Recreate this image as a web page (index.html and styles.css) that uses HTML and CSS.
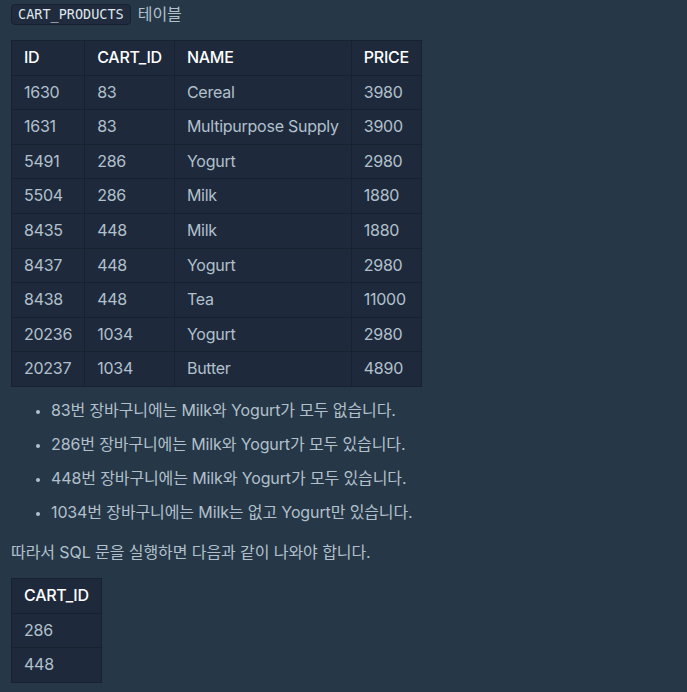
FILE: index.html
```html
<!DOCTYPE html>
<html lang="ko">
<head>
<meta charset="utf-8">
<link rel="stylesheet" href="styles.css">
</head>
<body>
<div class="content">
  <p class="title"><code class="code">CART_PRODUCTS</code> 테이블</p>
  <table class="tbl">
    <thead>
      <tr><th>ID</th><th>CART_ID</th><th>NAME</th><th>PRICE</th></tr>
    </thead>
    <tbody>
      <tr><td>1630</td><td>83</td><td>Cereal</td><td>3980</td></tr>
      <tr><td>1631</td><td>83</td><td>Multipurpose Supply</td><td>3900</td></tr>
      <tr><td>5491</td><td>286</td><td>Yogurt</td><td>2980</td></tr>
      <tr><td>5504</td><td>286</td><td>Milk</td><td>1880</td></tr>
      <tr><td>8435</td><td>448</td><td>Milk</td><td>1880</td></tr>
      <tr><td>8437</td><td>448</td><td>Yogurt</td><td>2980</td></tr>
      <tr><td>8438</td><td>448</td><td>Tea</td><td>11000</td></tr>
      <tr><td>20236</td><td>1034</td><td>Yogurt</td><td>2980</td></tr>
      <tr><td>20237</td><td>1034</td><td>Butter</td><td>4890</td></tr>
    </tbody>
  </table>
  <ul class="list">
    <li>83번 장바구니에는 Milk와 Yogurt가 모두 없습니다.</li>
    <li>286번 장바구니에는 Milk와 Yogurt가 모두 있습니다.</li>
    <li>448번 장바구니에는 Milk와 Yogurt가 모두 있습니다.</li>
    <li>1034번 장바구니에는 Milk는 없고 Yogurt만 있습니다.</li>
  </ul>
  <p class="para">따라서 SQL 문을 실행하면 다음과 같이 나와야 합니다.</p>
  <table class="tbl">
    <thead>
      <tr><th>CART_ID</th></tr>
    </thead>
    <tbody>
      <tr><td>286</td></tr>
      <tr><td>448</td></tr>
    </tbody>
  </table>
</div>
</body>
</html>
```
FILE: styles.css
```css
html, body {
  margin: 0;
  padding: 0;
  background: #263747;
}
body {
  font-family: Inter, "Noto Sans CJK KR", sans-serif;
  font-size: 16px;
  color: #b2c0cc;
}
.content {
  padding: 0 11px;
}
.title {
  margin: 0;
  padding-top: 3px;
  line-height: 22px;
  display: flex;
  align-items: center;
  gap: 7px;
}
.code {
  font-family: "DejaVu Sans Mono", monospace;
  font-size: 13.5px;
  color: #dfe6ec;
  background: #202b3d;
  border: 1px solid #172130;
  border-radius: 4px;
  padding: 1px 6px;
  line-height: 17px;
}
.tbl {
  border-collapse: collapse;
  background: #1e2a3c;
  margin-top: 15px;
}
.tbl th, .tbl td {
  border: 1px solid #172130;
  padding: 6px 12px;
  line-height: 21.6px;
  text-align: left;
  white-space: nowrap;
  letter-spacing: -0.25px;
}
.tbl th {
  color: #ffffff;
  font-weight: 500;
}
.list {
  margin: 6px 0 0;
  padding-left: 40px;
  letter-spacing: -0.12px;
}
.list li {
  line-height: 22px;
  padding: 6px 0;
}
.list li::marker {
  font-size: 12px;
}
.para {
  margin: 12px 0 0;
  line-height: 22px;
  letter-spacing: -0.08px;
}
```
